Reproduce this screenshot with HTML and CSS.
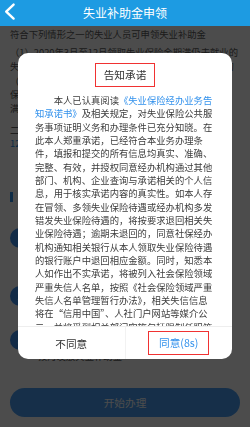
FILE: index.html
```html
<!DOCTYPE html>
<html lang="zh-CN">
<head>
<meta charset="utf-8">
<title>失业补助金申领</title>
<link rel="stylesheet" href="styles.css">
</head>
<body>
<header class="topbar">
  <a class="back" aria-label="返回">
    <svg width="26" height="26" viewBox="0 0 26 26"><path d="M13.6 4.6 L6.2 11.6 L13.6 18.6" fill="none" stroke="#fff" stroke-width="2.4" stroke-linecap="round" stroke-linejoin="round"/></svg>
  </a>
  <h1 class="title">失业补助金申领</h1>
  <span></span>
</header>

<main class="page">
  <p class="intro">符合下列情形之一的失业人员可申领失业补助金</p>
  <p class="item item-1">
    <span class="ln">（1）2020年3月至12月领取失业保险金期满仍未就业的</span>
    <span class="ln">失业人员，以及领取失业保险金期满仍未就业的失业的</span>
  </p>
  <p class="item item-2">
    <span class="ln">（2）不符合领取失业保险金条件的失业人员中的参</span>
    <span class="ln">保失业人员，2019年1月1日之后参保不</span>
    <span class="ln">满1年的失业人员。</span>
  </p>
  <p class="sub-head">二、申领时间</p>
  <p class="note">12月31日前均可通过线上渠道申领</p>

  <h2 class="section-title">办理流程</h2>
  <ol class="steps">
    <li class="step"><span class="num">1</span><div class="step-text"><b>填写申请</b><span>填写个人信息及银行账户</span><span>信息</span></div></li>
    <li class="step"><span class="num">2</span><div class="step-text"><b>经办审核</b><span>经办机构审核申请信息</span></div></li>
    <li class="step"><span class="num">3</span><div class="step-text"><b>发放补助</b><span>按月发放失业补助金</span></div></li>
  </ol>
  <button class="start-btn">开始办理</button>
</main>

<div class="mask">
  <section class="dialog">
    <div class="dialog-head"><span class="dialog-title">告知承诺</span></div>
    <div class="dialog-body">
      <p>本人已认真阅读<a class="link">《失业保险经办业务告知承诺书》</a>及相关规定，对失业保险公共服务事项证明义务和办理条件已充分知晓。在此本人郑重承诺，已经符合本业务办理条件，填报和提交的所有信息均真实、准确、完整、有效，并授权同意经办机构通过其他部门、机构、企业查询与承诺相关的个人信息，用于核实承诺内容的真实性。如本人存在冒领、多领失业保险待遇或经办机构多发错发失业保险待遇的，将按要求退回相关失业保险待遇；逾期未退回的，同意社保经办机构通知相关银行从本人领取失业保险待遇的银行账户中退回相应金额。同时，知悉本人如作出不实承诺，将被列入社会保险领域严重失信人名单，按照《社会保险领域严重失信人名单管理暂行办法》，相关失信信息将在“信用中国”、人社门户网站等媒介公示，并将受到相关部门实施包括限制任职等在内的联合惩戒。</p>
    </div>
    <div class="dialog-foot">
      <button class="btn btn-cancel">不同意</button>
      <button class="btn btn-ok"><span class="ok-box">同意(8s)</span></button>
    </div>
  </section>
</div>
</body>
</html>
```

FILE: styles.css
```css
* {
  box-sizing: border-box;
  margin: 0;
  padding: 0;
}

html,
body {
  width: 250px;
  height: 427px;
  overflow: hidden;
}

body {
  position: relative;
  background: #fff;
  color: #333;
  font-family: "Noto Sans CJK SC", "Noto Sans", sans-serif;
}

/* ---------- top bar ---------- */
.topbar {
  position: relative;
  z-index: 2;
  height: 26px;
  background: #1d9be2;
  display: grid;
  grid-template-columns: 26px 1fr 26px;
  align-items: center;
}

.back {
  display: block;
  width: 26px;
  height: 26px;
}

.back svg {
  display: block;
}

.title {
  font-size: 12px;
  font-weight: 400;
  line-height: 26px;
  color: #fff;
  text-align: center;
}

/* ---------- page underneath ---------- */
.page {
  padding: 2px 10px 0;
  font-size: 9.333px;
  line-height: 13.333px;
  color: #5a5a5a;
}

.ln {
  display: block;
  white-space: nowrap;
  overflow: hidden;
}

.item-1 {
  margin-top: 5px;
}

.item-2 {
  margin-top: 2px;
}

.sub-head {
  margin-top: 9px;
  color: #444;
}

.note {
  color: #2f8fe6;
  white-space: nowrap;
}

.section-title {
  margin-top: 41.3px;
  height: 10px;
  border-left: 3px solid #2f8fe6;
  padding-left: 5px;
  font-size: 10.667px;
  line-height: 10px;
  font-weight: 400;
  color: #333;
}

.steps {
  list-style: none;
  margin-top: 26px;
}

.step {
  display: flex;
  gap: 8px;
  padding-bottom: 11px;
}

.num {
  flex: none;
  width: 20px;
  height: 20px;
  border-radius: 50%;
  background: #3d8fee;
  color: #fff;
  font-size: 10px;
  line-height: 20px;
  text-align: center;
}

.step-text {
  display: flex;
  flex-direction: column;
}

.step-text b {
  font-weight: 400;
  font-size: 10.667px;
  line-height: 20px;
  color: #333;
}

.start-btn {
  display: block;
  width: 100%;
  height: 29px;
  margin-top: 13.7px;
  border: 0;
  border-radius: 14.5px;
  background: #4a9ff5;
  color: #fff;
  font: inherit;
  font-size: 10.667px;
}

/* ---------- mask + dialog ---------- */
.mask {
  position: fixed;
  z-index: 1;
  left: 0;
  right: 0;
  top: 26px;
  bottom: 0;
  background: rgba(0, 0, 0, 0.7);
  display: flex;
  justify-content: center;
  align-items: flex-start;
  padding-top: 27px;
}

.dialog {
  width: 214px;
  background: #fff;
  border-radius: 10px;
  overflow: hidden;
  display: flex;
  flex-direction: column;
}

.dialog-head {
  padding-top: 10px;
  display: flex;
  justify-content: center;
}

.dialog-title {
  border: 1px solid #f03232;
  padding: 0 8px;
  font-size: 10.667px;
  line-height: 22px;
  color: #333;
}

.dialog-body {
  margin-top: 7px;
  height: 232px;
  overflow: hidden;
  padding: 0 17px;
  font-size: 9.333px;
  line-height: 13.333px;
  color: #3c3c3c;
  text-indent: 2em;
}

.link {
  color: #3291ec;
  text-decoration: none;
}

.dialog-foot {
  height: 33px;
  border-top: 1px solid #eee;
  display: flex;
}

.btn {
  flex: 1;
  display: flex;
  align-items: center;
  justify-content: center;
  background: none;
  border: 0;
  font: inherit;
  font-size: 10.667px;
  color: #333;
}

.btn + .btn {
  border-left: 1px solid #f2f2f2;
}

.ok-box {
  border: 1px solid #f03232;
  padding: 0 10px;
  line-height: 22px;
  color: #3291ec;
}
```
